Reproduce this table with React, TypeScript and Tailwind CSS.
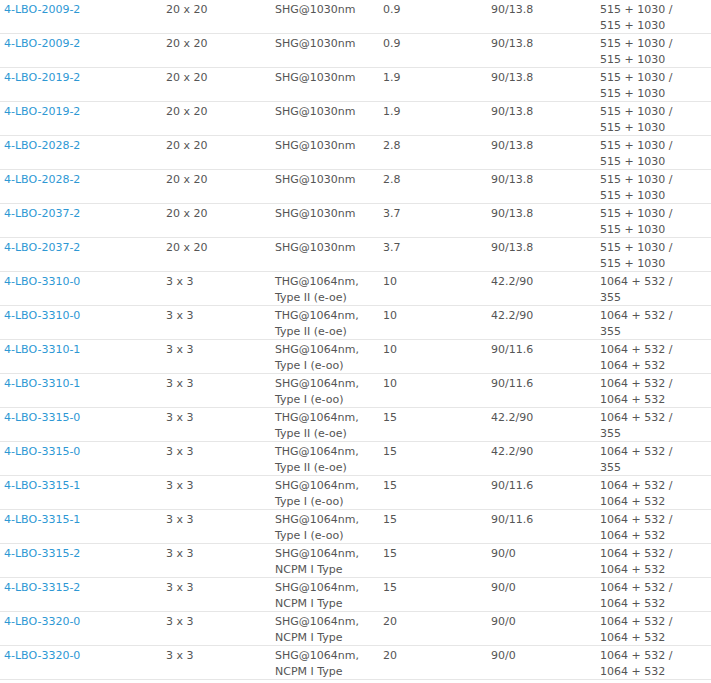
import React from "react";

type Row = [string, string, string, string, string, string, string, string];

const rows: Row[] = [
  ["4-LBO-2009-2", "20 x 20", "SHG@1030nm", "", "0.9", "90/13.8", "515 + 1030 /", "515 + 1030"],
  ["4-LBO-2009-2", "20 x 20", "SHG@1030nm", "", "0.9", "90/13.8", "515 + 1030 /", "515 + 1030"],
  ["4-LBO-2019-2", "20 x 20", "SHG@1030nm", "", "1.9", "90/13.8", "515 + 1030 /", "515 + 1030"],
  ["4-LBO-2019-2", "20 x 20", "SHG@1030nm", "", "1.9", "90/13.8", "515 + 1030 /", "515 + 1030"],
  ["4-LBO-2028-2", "20 x 20", "SHG@1030nm", "", "2.8", "90/13.8", "515 + 1030 /", "515 + 1030"],
  ["4-LBO-2028-2", "20 x 20", "SHG@1030nm", "", "2.8", "90/13.8", "515 + 1030 /", "515 + 1030"],
  ["4-LBO-2037-2", "20 x 20", "SHG@1030nm", "", "3.7", "90/13.8", "515 + 1030 /", "515 + 1030"],
  ["4-LBO-2037-2", "20 x 20", "SHG@1030nm", "", "3.7", "90/13.8", "515 + 1030 /", "515 + 1030"],
  ["4-LBO-3310-0", "3 x 3", "THG@1064nm,", "Type II (e-oe)", "10", "42.2/90", "1064 + 532 /", "355"],
  ["4-LBO-3310-0", "3 x 3", "THG@1064nm,", "Type II (e-oe)", "10", "42.2/90", "1064 + 532 /", "355"],
  ["4-LBO-3310-1", "3 x 3", "SHG@1064nm,", "Type I (e-oo)", "10", "90/11.6", "1064 + 532 /", "1064 + 532"],
  ["4-LBO-3310-1", "3 x 3", "SHG@1064nm,", "Type I (e-oo)", "10", "90/11.6", "1064 + 532 /", "1064 + 532"],
  ["4-LBO-3315-0", "3 x 3", "THG@1064nm,", "Type II (e-oe)", "15", "42.2/90", "1064 + 532 /", "355"],
  ["4-LBO-3315-0", "3 x 3", "THG@1064nm,", "Type II (e-oe)", "15", "42.2/90", "1064 + 532 /", "355"],
  ["4-LBO-3315-1", "3 x 3", "SHG@1064nm,", "Type I (e-oo)", "15", "90/11.6", "1064 + 532 /", "1064 + 532"],
  ["4-LBO-3315-1", "3 x 3", "SHG@1064nm,", "Type I (e-oo)", "15", "90/11.6", "1064 + 532 /", "1064 + 532"],
  ["4-LBO-3315-2", "3 x 3", "SHG@1064nm,", "NCPM I Type", "15", "90/0", "1064 + 532 /", "1064 + 532"],
  ["4-LBO-3315-2", "3 x 3", "SHG@1064nm,", "NCPM I Type", "15", "90/0", "1064 + 532 /", "1064 + 532"],
  ["4-LBO-3320-0", "3 x 3", "SHG@1064nm,", "NCPM I Type", "20", "90/0", "1064 + 532 /", "1064 + 532"],
  ["4-LBO-3320-0", "3 x 3", "SHG@1064nm,", "NCPM I Type", "20", "90/0", "1064 + 532 /", "1064 + 532"],
];

export default function App() {
  return (
    <div
      className="w-[711px] bg-white text-[11px] leading-[16px] text-[#555555]"
      style={{ fontFamily: '"DejaVu Sans", Verdana, sans-serif' }}
    >
      {rows.map((r, i) => (
        <div
          key={i}
          className="grid h-[34px] grid-cols-[162px_109px_108px_108px_109px_115px] border-b border-[#e6e6e6] pt-[2px]"
        >
          <div className="pl-[4px]">
            <a className="text-[#2d98d4]" href="#">
              {r[0]}
            </a>
          </div>
          <div className="pl-[4px]">{r[1]}</div>
          <div className="pl-[4px]">
            <div>{r[2]}</div>
            {r[3] && <div>{r[3]}</div>}
          </div>
          <div className="pl-[4px]">{r[4]}</div>
          <div className="pl-[4px]">{r[5]}</div>
          <div className="pl-[4px]">
            <div>{r[6]}</div>
            <div>{r[7]}</div>
          </div>
        </div>
      ))}
    </div>
  );
}
